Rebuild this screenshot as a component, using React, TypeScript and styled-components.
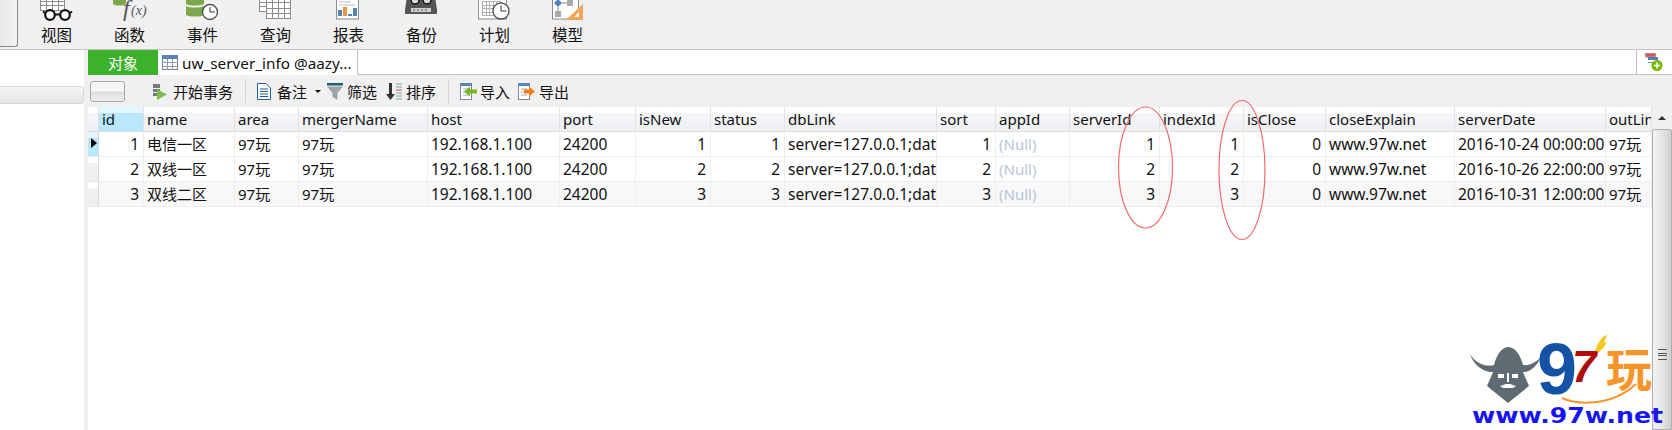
import React from "react";
import styled, { createGlobalStyle } from "styled-components";

// --- CONSTANTS ---
const FONT = `"Noto Sans", "Noto Sans CJK SC", sans-serif`;
const COLUMNS = "11px 45px 91px 64px 129px 132px 76px 75px 74px 152px 59px 74px 90px 84px 82px 129px 151px 46px";

const GlobalStyle = createGlobalStyle`
  html, body {
    margin: 0;
    padding: 0;
    background: #ffffff;
    overflow: hidden;
  }
`;

// --- LAYOUT ---
const Page = styled.div`
  position: relative;
  width: 1672px;
  height: 430px;
  overflow: hidden;
  display: flex;
  flex-direction: column;
  font-family: ${FONT};
  font-size: 15px;
  color: #111;
  background: #fff;
`;
const TopBar = styled.div`
  flex-shrink: 0;
  height: 49px;
  display: flex;
  background: #f0f0f0;
  border-bottom: 1px solid #c2c2c2;
`;
const ModeButton = styled.div`
  width: 17px;
  height: 46px;
  margin-right: 2px;
  background: linear-gradient(90deg, #e8e8e8, #f2f2f2);
  border-right: 1px solid #8a8a8a;
  border-bottom: 1px solid #8a8a8a;
  border-bottom-right-radius: 3px;
`;
const Tool = styled.div`
  width: 73px;
  display: flex;
  flex-direction: column;
  align-items: center;
  svg {
    display: block;
    flex-shrink: 0;
  }
`;
const ToolLabel = styled.span`
  margin-top: 2px;
  font-size: 15.5px;
  line-height: 22px;
`;
const Body = styled.div`
  flex: 1;
  display: flex;
  min-height: 0;
`;
const Sidebar = styled.div`
  width: 84px;
  flex-shrink: 0;
  padding-top: 36px;
  background: #fff;
  border-right: 4px solid #f0f0f0;
`;
const SidebarBar = styled.div`
  height: 16px;
  background: linear-gradient(#f6f6f6, #e4e4e4);
  border: 1px solid #d8d8d8;
  border-left: 0;
  border-radius: 0 4px 4px 0;
`;
const Main = styled.div`
  flex: 1;
  display: flex;
  flex-direction: column;
  min-width: 0;
`;
const TabBar = styled.div`
  flex-shrink: 0;
  height: 25px;
  display: flex;
  background: #fff;
  box-shadow: inset 0 -1px 0 #c2c2c2;
`;
const ObjectTab = styled.div`
  width: 70px;
  display: flex;
  align-items: center;
  justify-content: center;
  background: #3cb22a;
  color: #fff;
`;
const DocTab = styled.div`
  width: 200px;
  display: flex;
  align-items: center;
  gap: 3px;
  padding-left: 4px;
  box-sizing: border-box;
  background: #fff;
  border-right: 1px solid #c2c2c2;
  white-space: nowrap;
  font-size: 15.3px;
`;
const TabSpacer = styled.div`
  flex: 1;
`;
const TabAction = styled.div`
  width: 36px;
  display: flex;
  align-items: center;
  padding-left: 8px;
  box-sizing: border-box;
  border-left: 1px solid #c2c2c2;
  margin-bottom: 1px;
`;
const ActionBar = styled.div`
  flex-shrink: 0;
  height: 32px;
  display: flex;
  align-items: center;
  background: #f0f0f0;
  padding-left: 2px;
`;
const BlankButton = styled.div`
  width: 35px;
  height: 21px;
  box-sizing: border-box;
  margin-right: 27px;
  border: 1px solid #a8a8a8;
  border-radius: 3px;
  background: linear-gradient(#f6f6f6 45%, #dedede 55%, #f0f0f0);
`;
const Action = styled.div<{ $gap?: number; $mr?: number }>`
  display: flex;
  align-items: center;
  gap: ${(p) => p.$gap ?? 4}px;
  margin-right: ${(p) => p.$mr ?? 4}px;
  white-space: nowrap;
`;
const Separator = styled.div<{ $ml: number; $mr: number }>`
  width: 1px;
  height: 24px;
  background: #d4d4d4;
  margin: 0 ${(p) => p.$mr}px 0 ${(p) => p.$ml}px;
`;
const Caret = styled.div`
  width: 0;
  height: 0;
  margin: 0 6px 0 8px;
  border-left: 3px solid transparent;
  border-right: 3px solid transparent;
  border-top: 3px solid #111;
`;
const GridArea = styled.div`
  flex: 1;
  display: flex;
  min-height: 0;
`;
const Table = styled.div`
  flex: 1;
  background: #fff;
  overflow: hidden;
`;
const Row = styled.div`
  display: grid;
  grid-template-columns: ${COLUMNS};
  height: 25px;
`;
const HeadCell = styled.div<{ $active?: boolean }>`
  box-sizing: border-box;
  padding-left: 3px;
  line-height: 25px;
  overflow: hidden;
  white-space: nowrap;
  border-right: 1px solid #e2e3e6;
  border-bottom: 1px solid #dcdde0;
  background: ${(p) =>
    p.$active
      ? "linear-gradient(#e3f5fe 0, #e3f5fe 6px, #b9e7fc 6px, #b9e7fc 100%)"
      : "linear-gradient(#ffffff 0, #ffffff 6px, #f5f6f8 6px, #eeeff2 100%)"};
`;
const Cell = styled.div<{ $right?: boolean; $alt?: boolean; $nul?: boolean }>`
  box-sizing: border-box;
  padding: 0 ${(p) => (p.$right ? 4 : 0)}px 0 ${(p) => (p.$right ? 0 : 3)}px;
  font-size: 15.5px;
  line-height: 24px;
  overflow: hidden;
  white-space: nowrap;
  text-align: ${(p) => (p.$right ? "right" : "left")};
  color: ${(p) => (p.$nul ? "#b7c5de" : "#111")};
  background: ${(p) => (p.$alt ? "#f8f8f8" : "#fff")};
  border-right: 1px solid #eeeeee;
  border-bottom: 1px solid #eeeeee;
`;
const NameCell = styled(Cell)`
  font-size: 15px;
`;
const RowMark = styled.div<{ $current?: boolean }>`
  box-sizing: border-box;
  position: relative;
  border-right: 1px solid #d8d9dc;
  border-bottom: 1px solid #e6e6e6;
  background: ${(p) =>
    p.$current
      ? "linear-gradient(#e3f5fe 0, #e3f5fe 6px, #b9e7fc 6px, #b9e7fc 100%)"
      : "linear-gradient(#ffffff 0, #ffffff 6px, #f1f2f4 6px, #eceef0 100%)"};
  ${(p) =>
    p.$current
      ? `&::after {
          content: "";
          position: absolute;
          left: 3px;
          top: 6px;
          border-left: 6px solid #000;
          border-top: 5.5px solid transparent;
          border-bottom: 5.5px solid transparent;
        }`
      : ""}
`;
const Scrollbar = styled.div`
  width: 20px;
  flex-shrink: 0;
  display: flex;
  flex-direction: column;
  align-items: center;
  background: #f0f0f0;
`;
const ScrollArrow = styled.div`
  height: 22px;
  flex-shrink: 0;
  display: flex;
  align-items: center;
  &::before {
    content: "";
    border-left: 4px solid transparent;
    border-right: 4px solid transparent;
    border-bottom: 4px solid #333;
  }
`;
const ScrollThumb = styled.div`
  flex: 1;
  width: 100%;
  box-sizing: border-box;
  display: flex;
  justify-content: center;
  padding-top: 219px;
  border: 1px solid #aeaeae;
  border-radius: 2px 2px 0 0;
  background: linear-gradient(90deg, #f2f2f2, #e6e6e6 50%, #cfcfcf);
`;
const Grip = styled.div`
  width: 9px;
  height: 9px;
  border-top: 1px solid #555;
  border-bottom: 1px solid #555;
  position: relative;
  &::after {
    content: "";
    position: absolute;
    left: 0;
    right: 0;
    top: 3px;
    height: 3px;
    box-sizing: border-box;
    border-top: 1px solid #555;
    border-bottom: 1px solid #555;
  }
`;
const Annotation = styled.svg`
  position: absolute;
  left: 0;
  top: 0;
  pointer-events: none;
`;
const LogoMark = styled(Annotation)`
  left: 1440px;
  top: 320px;
`;

// --- ICONS ---
const GridLines = ({ x, y, w, h, cols, rows, color = "#8c8c8c" }: { x: number; y: number; w: number; h: number; cols: number; rows: number; color?: string }) => (
  <g stroke={color} strokeWidth="1" fill="#fff">
    <rect x={x + 0.5} y={y + 0.5} width={w} height={h} />
    {Array.from({ length: cols - 1 }, (_, i) => {
      const lx = Math.round(x + ((i + 1) * w) / cols) + 0.5;
      return <line key={"c" + i} x1={lx} x2={lx} y1={y} y2={y + h} />;
    })}
    {Array.from({ length: rows - 1 }, (_, i) => {
      const ly = Math.round(y + ((i + 1) * h) / rows) + 0.5;
      return <line key={"r" + i} x1={x} x2={x + w} y1={ly} y2={ly} />;
    })}
  </g>
);

const Clock = ({ cx, cy, r }: { cx: number; cy: number; r: number }) => (
  <g>
    <circle cx={cx} cy={cy} r={r} fill="#fff" stroke="#555" strokeWidth="1.4" />
    <path d={`M${cx} ${cy - r + 2.5}V${cy}H${cx + r - 2.5}`} fill="none" stroke="#333" strokeWidth="1" />
  </g>
);

const toolIcons: Record<string, React.ReactNode> = {
  view: (
    <>
      <GridLines x={20} y={-4} w={24} h={14} cols={4} rows={3} />
      <g fill="#fff" stroke="#111" strokeWidth="2.2">
        <circle cx="30" cy="15" r="4.8" />
        <circle cx="45" cy="15" r="4.8" />
      </g>
      <path d="M35 14.5h5M25 13l-2-1.5M50 13l2-1.5" stroke="#111" strokeWidth="2" fill="none" />
    </>
  ),
  func: (
    <>
      <path d="M20 -4h13v8c-3 2-10 2-13 0z" fill="#7ba84d" />
      <text x="30" y="16" fontFamily="Liberation Serif" fontStyle="italic" fontSize="24" fill="#555">f</text>
      <text x="38" y="15" fontFamily="Liberation Serif" fontStyle="italic" fontSize="14" fill="#555">(x)</text>
    </>
  ),
  event: (
    <>
      <path d="M20 -4h18v8c-4 2-14 2-18 0z" fill="#7ba84d" />
      <path d="M20 6c4 2 14 2 18 0v9c-4 2-14 2-18 0z" fill="#7ba84d" />
      <Clock cx={44} cy={12} r={7.5} />
    </>
  ),
  query: (
    <>
      <GridLines x={27} y={-3} w={24} h={21} cols={4} rows={4} />
      <GridLines x={20} y={-3} w={7} h={14} cols={1} rows={3} />
    </>
  ),
  report: (
    <>
      <rect x="24.5" y="-3" width="22" height="22" fill="#fff" stroke="#8c8c8c" />
      <path d="M27 2h12M27 5h16" stroke="#bdbdbd" />
      <rect x="26" y="10" width="4" height="6" fill="#4f86bd" />
      <rect x="31" y="7" width="4" height="9" fill="#f0953a" />
      <rect x="36" y="14" width="4" height="2" fill="#4f86bd" />
      <rect x="41" y="8" width="4" height="8" fill="#4f86bd" />
    </>
  ),
  backup: (
    <>
      <path d="M22 -4h28l2 14v3a1 1 0 0 1-1 1H21a1 1 0 0 1-1-1v-3z" fill="#555" />
      <circle cx="30" cy="0" r="4" fill="#ddd" stroke="#111" strokeWidth="1.5" />
      <circle cx="42" cy="0" r="4" fill="#ddd" stroke="#111" strokeWidth="1.5" />
      <rect x="26" y="8" width="20" height="4" fill="#cfcfcf" />
      <path d="M28 10h16" stroke="#555" strokeDasharray="2 2" />
    </>
  ),
  plan: (
    <>
      <rect x="20.5" y="-3" width="28" height="22" fill="#fff" stroke="#8c8c8c" />
      <GridLines x={24} y={1} w={18} h={14} cols={5} rows={4} color="#b0b0b0" />
      <Clock cx={43} cy={11} r={8} />
    </>
  ),
  model: (
    <>
      <rect x="21.5" y="-3" width="26" height="22" fill="#fff" stroke="#8c8c8c" />
      <path d="M27 -1l4 4-4 4-4-4z" fill="#4f86bd" />
      <rect x="36" y="0" width="6" height="6" fill="#a9a9a9" />
      <rect x="24" y="11" width="6" height="6" fill="#a9a9a9" />
      <path d="M31 3h5M27 7v4" stroke="#888" />
      <path d="M52 4v16H35z" fill="#f6a354" />
      <path d="M48 12v5h-5z" fill="#fff" />
    </>
  ),
};

const tools = [
  { key: "view", label: "视图" },
  { key: "func", label: "函数" },
  { key: "event", label: "事件" },
  { key: "query", label: "查询" },
  { key: "report", label: "报表" },
  { key: "backup", label: "备份" },
  { key: "plan", label: "计划" },
  { key: "model", label: "模型" },
];

const TableIcon = () => (
  <svg width="17" height="16" viewBox="0 0 17 16">
    <rect x="0.5" y="0.5" width="15" height="14" fill="#fff" stroke="#6e7f96" />
    <rect x="0" y="0" width="16" height="4" fill="#5b83b3" />
    <path d="M5.5 4v11M10.5 4v11M0 7.5h16M0 11.5h16" stroke="#8b9bb0" />
  </svg>
);

const AddTableIcon = () => (
  <svg width="18" height="18" viewBox="0 0 18 18">
    <rect x="0.5" y="0.5" width="10" height="3" fill="#d9534f" stroke="#b55" strokeWidth=".5" />
    <path d="M0.5 4h10M3 6.5h10" stroke="#888" />
    <rect x="3" y="4" width="10" height="3" fill="#4f7fb5" />
    <path d="M3 9.5h6" stroke="#888" />
    <circle cx="12" cy="12.5" r="5.5" fill="#76b900" />
    <path d="M12 9.5v6M9 12.5h6" stroke="#fff" strokeWidth="1.6" />
  </svg>
);

const TransactionIcon = () => (
  <svg width="16" height="17" viewBox="0 0 16 17">
    <path d="M1 1h7v4H1zM1 6h7v3H1zM1 10h4v3H1z" fill="#777" />
    <path d="M5 6l10 5.5L5 17z" fill="#7cc04b" />
  </svg>
);

const MemoIcon = () => (
  <svg width="14" height="17" viewBox="0 0 14 17">
    <path d="M.5.5H9L13.5 5v11.5H.5z" fill="#fff" stroke="#1f5f9f" />
    <path d="M3 6h8M3 8.5h8M3 11h8M3 13.5h8" stroke="#1f5f9f" />
  </svg>
);

const FilterIcon = () => (
  <svg width="16" height="17" viewBox="0 0 16 17">
    <rect x="0" y="0" width="16" height="2.5" fill="#1f5f6f" />
    <path d="M0 3.5h16l-5.5 6.5v7l-5-3v-4z" fill="#9aa5a8" />
  </svg>
);

const SortIcon = () => (
  <svg width="16" height="17" viewBox="0 0 16 17">
    <path d="M3 0h3v11h3l-4.500 6L0 11h3z" fill="#333" />
    <path d="M10 1h6M10 4h6M10 10h6M10 13h6M10 16h6" stroke="#6fa98f" />
    <path d="M10 7h6" stroke="#d0455a" />
  </svg>
);

const DataIcon = ({ dir }: { dir: "in" | "out" }) => (
  <svg width="18" height="17" viewBox="0 0 18 17">
    <rect x=".5" y=".5" width="11" height="16" fill="#fff" stroke="#7a8a9c" />
    <rect x="0" y="0" width="12" height="3" fill="#5b83b3" />
    <path d="M3 6h6M3 9h6M3 12h6" stroke="#aaa" />
    {dir === "in" ? (
      <path d="M4 8.500L10 3.500v3h7v4h-7v3z" fill="#76b82a" />
    ) : (
      <path d="M6 6.500h5v-3l6 5-6 5v-3H6z" fill="#f57c14" />
    )}
  </svg>
);

const Logo = () => (
  <LogoMark width="232" height="110" viewBox="0 0 232 110">
    <path d="M30 34C36 44 46 47 54 45C57 33 63 27 68 27C74 27 80 33 83 45C90 46 96 42 101 37C97 46 90 52 84 52H52C44 52 34 46 30 34Z" fill="#5f6b72" />
    <path d="M54 50L47 66L68 83L89 66L82 50Z" fill="#5f6b72" />
    <path d="M58 54h6v4h-6zM72 54h6v4h-6zM67 53h2v9h-2zM60 66l6-2h4l6 2-3 2h-10z" fill="#fff" />
    <path d="M122 78C135 84 170 88 196 64" fill="none" stroke="#f7952a" strokeWidth="2" />
    <text x="97" y="74" fontFamily="Liberation Sans" fontWeight="700" fontSize="72" fill="#1452a8">9</text>
    <text x="132" y="62" fontFamily="Liberation Sans" fontWeight="700" fontStyle="italic" fontSize="44" fill="#b00d0d">7</text>
    <path d="M155 31C158 22 162 16 167 15C165 20 163 26 160 32ZM160 24L167 22L162 30Z" fill="#f6c81e" />
    <text x="166" y="66" fontFamily="Noto Sans CJK SC" fontWeight="700" fontSize="46" fill="#f7952a">玩</text>
    <text x="32" y="103" fontFamily="DejaVu Sans" fontWeight="700" fontSize="21" textLength="191" lengthAdjust="spacingAndGlyphs" fill="#1515f5">www.97w.net</text>
  </LogoMark>
);

// --- DATA ---
const headers = ["id", "name", "area", "mergerName", "host", "port", "isNew", "status", "dbLink", "sort", "appId", "serverId", "indexId", "isClose", "closeExplain", "serverDate", "outLin"];

const rows = [
  { id: 1, name: "电信一区", date: "2016-10-24 00:00:00" },
  { id: 2, name: "双线一区", date: "2016-10-26 22:00:00" },
  { id: 3, name: "双线二区", date: "2016-10-31 12:00:00" },
];

const App: React.FC = () => (
  <Page>
    <GlobalStyle />
    <TopBar>
      <ModeButton />
      {tools.map((t) => (
        <Tool key={t.key}>
          <svg width="73" height="22" viewBox="0 0 73 22">{toolIcons[t.key]}</svg>
          <ToolLabel>{t.label}</ToolLabel>
        </Tool>
      ))}
    </TopBar>
    <Body>
      <Sidebar>
        <SidebarBar />
      </Sidebar>
      <Main>
        <TabBar>
          <ObjectTab>对象</ObjectTab>
          <DocTab>
            <TableIcon />
            uw_server_info @aazy...
          </DocTab>
          <TabSpacer />
          <TabAction>
            <AddTableIcon />
          </TabAction>
        </TabBar>
        <ActionBar>
          <BlankButton />
          <Action $gap={5}>
            <TransactionIcon />
            开始事务
          </Action>
          <Separator $ml={8} $mr={11} />
          <Action $gap={6} $mr={0}>
            <MemoIcon />
            备注
          </Action>
          <Caret />
          <Action $mr={9}>
            <FilterIcon />
            筛选
          </Action>
          <Action $mr={0}>
            <SortIcon />
            排序
          </Action>
          <Separator $ml={12} $mr={11} />
          <Action $gap={2} $mr={8}>
            <DataIcon dir="in" />
            导入
          </Action>
          <Action $gap={3}>
            <DataIcon dir="out" />
            导出
          </Action>
        </ActionBar>
        <GridArea>
          <Table>
            <Row>
              <HeadCell />
              {headers.map((h) => (
                <HeadCell key={h} $active={h === "id"}>{h}</HeadCell>
              ))}
            </Row>
            {rows.map((r) => {
              const alt = r.id === 3;
              return (
                <Row key={r.id}>
                  <RowMark $current={r.id === 1} />
                  <Cell $alt={alt} $right>{r.id}</Cell>
                  <NameCell $alt={alt}>{r.name}</NameCell>
                  <NameCell $alt={alt}>97玩</NameCell>
                  <NameCell $alt={alt}>97玩</NameCell>
                  <Cell $alt={alt}>192.168.1.100</Cell>
                  <Cell $alt={alt}>24200</Cell>
                  <Cell $alt={alt} $right>{r.id}</Cell>
                  <Cell $alt={alt} $right>{r.id}</Cell>
                  <Cell $alt={alt}>server=127.0.0.1;dat</Cell>
                  <Cell $alt={alt} $right>{r.id}</Cell>
                  <NameCell $alt={alt} $nul>(Null)</NameCell>
                  <Cell $alt={alt} $right>{r.id}</Cell>
                  <Cell $alt={alt} $right>{r.id}</Cell>
                  <Cell $alt={alt} $right>0</Cell>
                  <Cell $alt={alt}>www.97w.net</Cell>
                  <Cell $alt={alt}>{r.date}</Cell>
                  <NameCell $alt={alt}>97玩</NameCell>
                </Row>
              );
            })}
          </Table>
          <Scrollbar>
            <ScrollArrow />
            <ScrollThumb>
              <Grip />
            </ScrollThumb>
          </Scrollbar>
        </GridArea>
      </Main>
    </Body>
    {/* hand-drawn red circles on top of the screenshot */}
    <Annotation width="1672" height="430" viewBox="0 0 1672 430">
      <ellipse cx="1145.500" cy="167.500" rx="27" ry="60.500" fill="none" stroke="#f26a6a" strokeWidth="1.200" />
      <ellipse cx="1242" cy="170" rx="23" ry="69.500" fill="none" stroke="#f26a6a" strokeWidth="1.200" />
    </Annotation>
    <Logo />
  </Page>
);

export default App;
